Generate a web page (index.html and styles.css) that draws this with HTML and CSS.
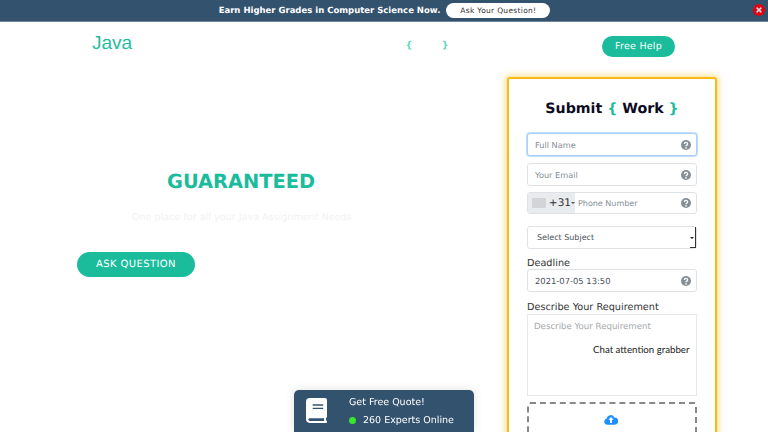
FILE: index.html
```html
<!DOCTYPE html>
<html lang="en">
<head>
<meta charset="utf-8">
<title>Java Assignment Help</title>
<link rel="stylesheet" href="styles.css">
</head>
<body>
<div class="topbar">
  <span class="topbar-text">Earn Higher Grades in Computer Science Now.</span>
  <a class="topbar-btn">Ask Your Question!</a>
  <span class="close"><svg viewBox="0 0 12 12" width="12" height="12"><circle cx="6" cy="6" r="6" fill="#e3000f"/><path d="M3.6 3.6l4.8 4.8M8.4 3.6L3.6 8.4" stroke="#c9d3dc" stroke-width="1.6"/></svg></span>
</div>
<header class="header">
  <div class="logo">Java</div>
  <div class="nav-braces"><span>{</span><span>}</span></div>
  <a class="help-btn">Free Help</a>
</header>
<main class="main">
  <section class="hero">
    <h1 class="hero-title">GUARANTEED</h1>
    <p class="hero-sub">One place for all your Java Assignment Needs</p>
    <a class="ask-btn">ASK QUESTION</a>
  </section>
  <aside class="card">
    <h2 class="card-title">Submit <span class="brace">{</span> Work <span class="brace">}</span></h2>
    <div class="field field-focus"><span class="ph">Full Name</span><svg class="help" viewBox="0 0 10 10"><use href="#q"/></svg></div>
    <div class="field field-email"><span class="ph">Your Email</span><svg class="help" viewBox="0 0 10 10"><use href="#q"/></svg></div>
    <div class="field phone">
      <div class="dial"><span class="flag"></span><span class="code">+31</span><span class="caret"></span></div>
      <span class="ph ph-phone">Phone Number</span><svg class="help" viewBox="0 0 10 10"><use href="#q"/></svg>
    </div>
    <div class="field select"><span class="sel-text">Select Subject</span><span class="sel-arrow"></span></div>
    <label class="lbl">Deadline</label>
    <div class="field"><span class="val">2021-07-05 13:50</span><svg class="help" viewBox="0 0 10 10"><use href="#q"/></svg></div>
    <label class="lbl lbl-desc">Describe Your Requirement</label>
    <div class="textarea"><span class="ta-ph">Describe Your Requirement</span></div>
    <div class="upload"><svg class="cloud" viewBox="0 0 16 12" width="14" height="11"><path fill="#1e90ff" d="M4 12a3.6 3.6 0 0 1-.9-7.1A4.6 4.6 0 0 1 11.8 3.6 4.2 4.2 0 0 1 12.2 12z"/><path fill="#fff" d="M8 3.2l3 3.2H9.1V10H6.9V6.4H5z"/></svg></div>
    <div class="grabber">Chat attention grabber</div>
  </aside>
</main>
<div class="quote">
  <svg class="book" viewBox="0 0 22 26" width="21" height="25"><path fill="#fff" fill-rule="evenodd" d="M4 0h16a2 2 0 0 1 2 2v17.5a1.5 1.5 0 0 1-1 1.3v2.7a1.500 1.500 0 0 0 1 .5v1a1 1 0 0 1-1 1H4a4 4 0 0 1-4-4V4a4 4 0 0 1 4-4zM7 6.500v1.500h11V6.500zM7 10v1.500h11V10zM4 21a1.500 1.500 0 0 0 0 3h15v-3z"/></svg>
  <div class="quote-text">
    <div class="quote-line">Get Free Quote!</div>
    <div class="quote-line online"><span class="dot"></span>260 Experts Online</div>
  </div>
</div>
<svg class="defs" width="0" height="0"><defs><g id="q"><circle cx="5" cy="5" r="5" fill="#868e96"/><path d="M3.400 3.900a1.600 1.500 0 1 1 2.500 1.200c-.6.4-.9.700-.9 1.200" fill="none" stroke="#fff" stroke-width="1.300"/><circle cx="5" cy="7.900" r=".8" fill="#fff"/></g></defs></svg>
</body>
</html>
```
FILE: styles.css
```css
* { box-sizing: border-box; }
html, body { margin: 0; height: 432px; overflow: hidden; background: #fff; font-family: "DejaVu Sans", sans-serif; text-rendering: geometricPrecision; }
.defs { position: absolute; }

.topbar { height: 22px; background: #33526e; border-bottom: 1px solid #6f8599; display: flex; align-items: center; justify-content: center; gap: 6px; padding-left: 1px; position: relative; }
.topbar-text { color: #fff; font-size: 8.500px; font-weight: 700; }
.topbar-btn { background: #fff; color: #333; font-size: 7.500px; letter-spacing: .3px; height: 15px; width: 104px; border-radius: 8px; display: flex; align-items: center; justify-content: center; }
.close { position: absolute; left: 753px; top: 4px; width: 12px; height: 12px; }
.close svg { display: block; }

.header { height: 46px; display: flex; align-items: center; position: relative; padding-left: 92px; }
.logo { font-family: "Liberation Sans", sans-serif; font-size: 19px; color: #25bd9e; width: 313.5px; margin-top: -3px; }
.nav-braces { width: 43px; display: flex; justify-content: space-between; color: #5fd8c0; font-size: 9.500px; font-weight: 700; margin-top: 1px; }
.help-btn { margin-left: 153.5px; margin-top: 3px; width: 73px; height: 21px; border-radius: 11px; background: #1abc9c; color: #fff; font-size: 9.500px; letter-spacing: .25px; display: flex; align-items: center; justify-content: center; }

.main { display: flex; align-items: flex-start; padding-top: 9px; }
.hero { width: 507px; padding-left: 77px; }
.hero-title { margin: 92px 0 0; width: 328px; text-align: center; color: #1abc9c; font-size: 19.400px; line-height: 26px; font-weight: 700; }
.hero-sub { margin: 16px 0 0 55px; color: #f1f2f4; font-size: 9.500px; line-height: 14px; letter-spacing: .05px; white-space: nowrap; }
.ask-btn { margin-top: 27px; width: 118px; height: 25px; border-radius: 13px; background: #1abc9c; color: #fff; font-size: 10px; letter-spacing: .4px; display: flex; align-items: center; justify-content: center; }

.card { position: relative; width: 210px; height: 420px; background: #fff; border: 2px solid #fdb913; border-radius: 3px; box-shadow: 0 0 6px 2px rgba(253,200,70,.55); padding: 19px 18px 0; flex: none; }
.card-title { margin: 0 0 13px; height: 22px; text-align: center; font-size: 14.200px; line-height: 22px; font-weight: 700; color: #0b0b1e; white-space: nowrap; }
.brace { color: #1abc9c; }
.field { width: 170px; height: 23px; margin-bottom: 7px; background: #fff; border: 1px solid #dee2e6; border-radius: 3px; display: flex; align-items: center; padding: 0 5px 0 7px; font-size: 8.200px; color: #868e96; }
.field-focus { border-color: #a9d0fb; box-shadow: 0 0 0 1px #c4dffc; }
.field-email { margin-bottom: 6px; }
.ph, .val { flex: 1; }
.val { color: #495057; font-size: 8.400px; }
.help { width: 10px; height: 10px; flex: none; }
.phone { padding: 0 5px 0 0; height: 22px; margin-bottom: 12px; overflow: hidden; }
.ph-phone { font-size: 8px; }
.dial { width: 47px; height: 100%; background: #e9ecef; display: flex; align-items: center; padding-left: 4px; margin-right: 3px; flex: none; }
.flag { width: 14px; height: 10px; background: #d2d4d6; border-radius: 1px; }
.code { margin-left: 3px; font-size: 10.500px; color: #333; }
.caret { border: 2px solid transparent; border-top: 2px solid #555; border-bottom: 0; }
.select { position: relative; height: 23px; margin-bottom: 6px; padding-left: 9px; font-size: 8px; }
.sel-text { color: #495057; }
.sel-arrow { position: absolute; right: 0; top: 0; width: 6px; height: 21px; border-right: 1px solid #333; border-bottom: 1px solid #333; }
.sel-arrow::after { content: ""; position: absolute; left: 0; top: 10px; border: 2px solid transparent; border-top: 2px solid #222; border-bottom: 0; }
.lbl { display: block; font-size: 9.700px; line-height: 14px; padding-top: 2px; height: 14px; color: #333; }
.lbl-desc { height: 15px; }
.textarea { width: 170px; height: 82px; border: 1px solid #e6e8ea; padding: 7px 6px 6px; font-size: 8.600px; color: #a5a8ab; }
.upload { width: 170px; height: 60px; margin-top: 6px; border: 2px dashed #888; border-radius: 3px; display: flex; justify-content: center; padding-top: 10px; padding-right: 2px; }
.cloud { display: block; }
.grabber { position: absolute; left: 84px; top: 264px; font-family: Lato, sans-serif; font-size: 9.700px; line-height: 14px; color: #222; white-space: nowrap; }

.quote { position: fixed; left: 294px; top: 390px; width: 180px; height: 42px; background: #33526e; border-radius: 5px 5px 0 0; box-shadow: 0 0 10px rgba(0,0,0,.12); display: flex; align-items: flex-start; padding: 8px 0 0 12px; color: #fff; font-size: 9.500px; }
.book { flex: none; margin-right: 22px; }
.quote-text { margin-top: -4px; }
.quote-line { height: 18px; line-height: 18px; }
.quote-line.online { height: 17px; display: flex; align-items: center; }
.dot { width: 7px; height: 7px; border-radius: 50%; background: #39e62b; margin-right: 7px; }
```
